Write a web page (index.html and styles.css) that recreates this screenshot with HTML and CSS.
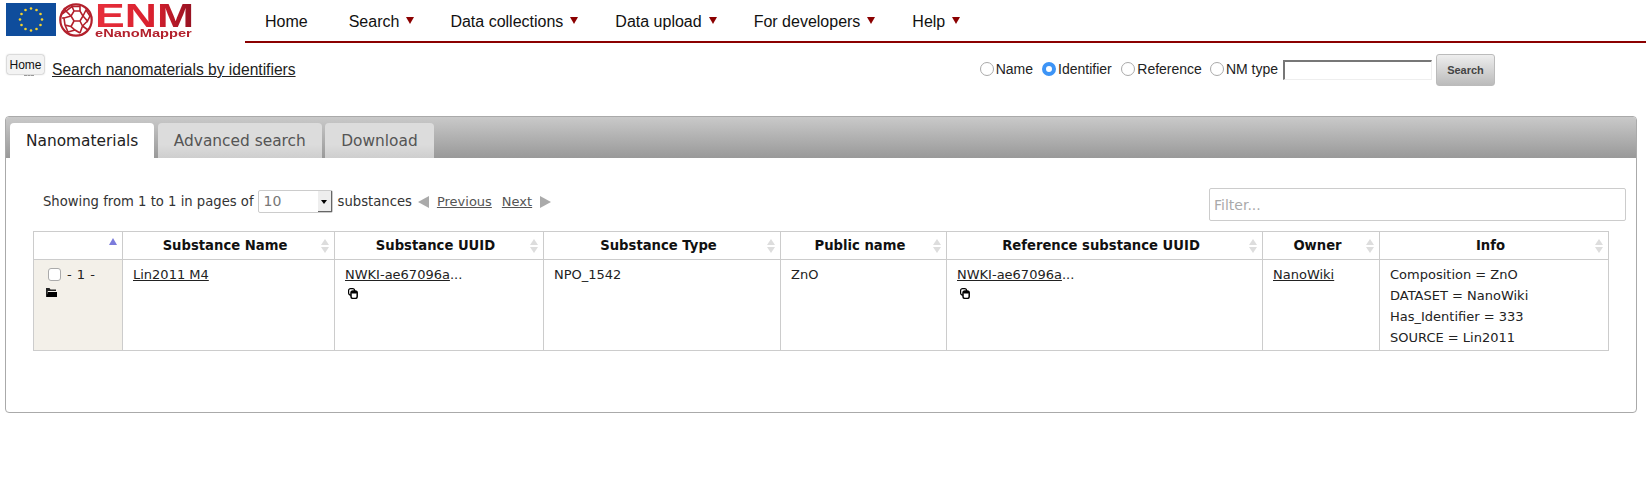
FILE: index.html
```html
<!DOCTYPE html>
<html lang="en">
	<head>
		<meta charset="UTF-8" />
		<title>Search nanomaterials by identifiers</title>
		<link rel="stylesheet" href="styles.css">
	</head>
	<body>
		<div class="topbar">
			<div class="logo">
				<svg class="flag" width="50" height="33" viewBox="0 0 50 33">
					<rect width="50" height="33" fill="#0f4d9c" />
					<g fill="#f6d32d">
						<circle cx="25" cy="5.500" r="1.300" /><circle cx="30.500" cy="7" r="1.300" /><circle cx="34.500" cy="11" r="1.300" />
						<circle cx="36" cy="16.500" r="1.300" /><circle cx="34.500" cy="22" r="1.300" /><circle cx="30.500" cy="26" r="1.300" />
						<circle cx="25" cy="27.500" r="1.300" /><circle cx="19.500" cy="26" r="1.300" /><circle cx="15.500" cy="22" r="1.300" />
						<circle cx="14" cy="16.500" r="1.300" /><circle cx="15.500" cy="11" r="1.300" /><circle cx="19.500" cy="7" r="1.300" />
					</g>
				</svg>
				<svg class="ball" width="34" height="34" viewBox="0 0 34 34">
					<circle cx="17" cy="17" r="15.700" fill="#fff" stroke="#b3202c" stroke-width="2.200" />
					<g fill="none" stroke="#b3202c" stroke-width="1.600">
						<path d="M15 8h6l3 5-3 5h-6l-3-5z" />
						<path d="M15 8L13 3.500h8L21 8M24 13l3-6 4 6-2.500 5-4.500-5M21 18l2.500 5 5-5M23.500 23L21 30M15 18l-3 5.500 4 3.500 5 3M12 13L7 8l6-4.500M12 13l-7 2 1 7 6 1.500M6 22l3 7 7-2" />
						<path d="M3 11l4-3M3 15h2M29 27l-5.500-4M7 8L5 5" />
					</g>
				</svg>
				<div class="brand">
					<span class="brand-big">ENM</span>
					<span class="brand-small">eNanoMapper</span>
				</div>
			</div>
			<ul class="mainmenu">
				<li class="first">Home</li>
				<li class="second">Search<i class="caret"></i></li>
				<li>Data collections<i class="caret"></i></li>
				<li>Data upload<i class="caret"></i></li>
				<li>For developers<i class="caret"></i></li>
				<li>Help<i class="caret"></i></li>
			</ul>
		</div>

		<div class="searchrow">
			<span class="tip">Home</span>
			<a class="searchtitle" href="#">Search nanomaterials by identifiers</a>
			<form class="searchform">
				<label class="name"><input type="radio" name="by" />Name</label>
				<label class="wide"><input type="radio" name="by" checked />Identifier</label>
				<label><input type="radio" name="by" />Reference</label>
				<label><input type="radio" name="by" />NM type</label>
				<input class="searchbox" type="text" />
				<button class="searchbtn" type="button">Search</button>
			</form>
		</div>

		<div class="panel">
			<div class="tabbar">
				<div class="tab active">Nanomaterials</div>
				<div class="tab">Advanced search</div>
				<div class="tab">Download</div>
			</div>
			<div class="tabbody">
				<div class="controls">
					<div class="pager">
						Showing from 1 to 1 in pages of
						<span class="pagesize">10<i class="pagesize-btn"></i></span>
						substances
						<i class="tri tri-left"></i>
						<a href="#">Previous</a>
						<a class="next" href="#">Next</a>
						<i class="tri tri-right"></i>
					</div>
					<input class="filter" type="text" placeholder="Filter..." />
				</div>
				<table class="results">
					<colgroup>
						<col class="c0" /><col class="c1" /><col class="c2" /><col class="c3" />
						<col class="c4" /><col class="c5" /><col class="c6" /><col class="c7" />
					</colgroup>
					<thead>
						<tr>
							<th class="sorted"></th>
							<th class="sortable">Substance Name</th>
							<th class="sortable">Substance UUID</th>
							<th class="sortable">Substance Type</th>
							<th class="sortable">Public name</th>
							<th class="sortable">Reference substance UUID</th>
							<th class="sortable">Owner</th>
							<th class="sortable">Info</th>
						</tr>
					</thead>
					<tbody>
						<tr>
							<td class="rowhead">
								<div class="rownum"><input type="checkbox" /> - 1 -</div>
								<svg class="folder" width="11" height="9" viewBox="0 0 11 9"><path d="M0 1V0h3.500l1 1.500H10V3H2L1 5V1z" fill="#222" /><path d="M1.500 4h9.500v5H0.500z" fill="#000" /><path d="M0 1h1v8H0z" fill="#222" /></svg>
							</td>
							<td><a href="#">Lin2011 M4</a></td>
							<td>
								<a href="#">NWKI-ae67096a</a>...
								<svg class="copyicon" width="10" height="11" viewBox="0 0 10 11"><rect x="0.600" y="0.600" width="6" height="6.500" rx="2" fill="#fff" stroke="#000" stroke-width="1.200" /><rect x="3" y="3" width="6.200" height="7.400" rx="2" fill="#fff" stroke="#000" stroke-width="1.500" /><rect x="3" y="3" width="6.200" height="2.500" rx="1" fill="#000" /></svg>
							</td>
							<td>NPO_1542</td>
							<td>ZnO</td>
							<td>
								<a href="#">NWKI-ae67096a</a>...
								<svg class="copyicon" width="10" height="11" viewBox="0 0 10 11"><rect x="0.600" y="0.600" width="6" height="6.500" rx="2" fill="#fff" stroke="#000" stroke-width="1.200" /><rect x="3" y="3" width="6.200" height="7.400" rx="2" fill="#fff" stroke="#000" stroke-width="1.500" /><rect x="3" y="3" width="6.200" height="2.500" rx="1" fill="#000" /></svg>
							</td>
							<td><a href="#">NanoWiki</a></td>
							<td class="info">Composition = ZnO<br />DATASET = NanoWiki<br />Has_Identifier = 333<br />SOURCE = Lin2011</td>
						</tr>
					</tbody>
				</table>
			</div>
		</div>
	</body>
</html>
```

FILE: styles.css
```css
* {
	margin: 0;
	padding: 0;
	box-sizing: border-box;
}
body {
	font-family: "Liberation Sans", Arial, sans-serif;
	color: #222;
	background-color: #fff;
}
a {
	color: #222;
}

/* top bar */
.topbar {
	display: flex;
	height: 43px;
}
.logo {
	width: 245px;
	display: flex;
	align-items: flex-start;
	padding: 3px 0 0 6px;
}
.ball {
	margin-left: 3px;
}
.brand {
	display: flex;
	flex-direction: column;
	width: 98px;
	margin-left: 2px;
}
.brand-big {
	width: 72px;
	height: 25px;
	font-size: 33px;
	font-weight: bold;
	line-height: 25px;
	transform: scaleX(1.350);
	transform-origin: left;
	background: linear-gradient(90deg, #e8303c, #d8202e 60%, #961222);
	-webkit-background-clip: text;
	background-clip: text;
	color: transparent;
}
.brand-small {
	width: 62px;
	height: 8px;
	margin-top: 1px;
	font-size: 11px;
	font-weight: bold;
	line-height: 8px;
	white-space: nowrap;
	transform: scaleX(1.330);
	transform-origin: left;
	color: #b3202c;
}
.mainmenu {
	flex: 1;
	list-style: none;
	display: flex;
	padding: 13px 0 0 20px;
	border-bottom: 2px solid #8b0000;
	font-size: 16px;
	line-height: 18px;
	color: #111;
}
.mainmenu li {
	margin-right: 37px;
}
.mainmenu li.first {
	margin-right: 41px;
}
.mainmenu li.second {
	margin-right: 36px;
}
.caret {
	display: inline-block;
	margin: 0 0 3px 7px;
	border-left: 4.500px solid transparent;
	border-right: 4.500px solid transparent;
	border-top: 7px solid #8b0000;
}

/* search row */
.searchrow {
	position: relative;
	display: flex;
	align-items: flex-start;
	justify-content: space-between;
	height: 73px;
	padding: 11px 151px 0 52px;
}
.tip {
	position: absolute;
	left: 7px;
	top: 12px;
	width: 37px;
	height: 19px;
	border-radius: 2px;
	background-color: #f3f3f3;
	box-shadow: 0 0 2px #777;
	font-size: 12px;
	line-height: 20px;
	text-align: center;
	color: #111;
}
.tip::after {
	content: "";
	position: absolute;
	left: 17px;
	top: 20px;
	width: 10px;
	border-top: 1px dashed #999;
}
.searchtitle {
	font-size: 15.600px;
	line-height: 31px;
}
.searchform {
	display: flex;
	align-items: center;
	height: 31px;
	font-size: 14px;
	color: #222;
}
.searchform label {
	display: flex;
	align-items: center;
	margin-right: 8px;
	padding-bottom: 2px;
}
.searchform label.name {
	margin-right: 9px;
}
.searchform label.wide {
	margin-right: 9.500px;
}
.searchform input[type="radio"] {
	appearance: none;
	width: 14px;
	height: 14px;
	margin-right: 2px;
	border: 1px solid #aaa;
	border-radius: 50%;
	background-color: #fff;
}
.searchform input[type="radio"]:checked {
	border: 4.500px solid #3d94f6;
	background-color: #fff;
}
.searchbox {
	width: 149px;
	height: 20px;
	margin: 0 4px 0 -3px;
	border: 1px solid #eee;
	border-top: 2px solid #777;
	border-left: 2px solid #777;
}
.searchbtn {
	width: 59px;
	height: 32px;
	border: 1px solid #bbb;
	border-radius: 3px;
	background: linear-gradient(#eee, #bbb);
	font-family: "Liberation Sans", Arial, sans-serif;
	font-size: 11px;
	font-weight: bold;
	color: #444;
}

/* panel with tabs */
.panel {
	margin: 0 9px 0 5px;
	height: 297px;
	border: 1px solid #aaa;
	border-radius: 4px;
	font-family: "DejaVu Sans", Verdana, sans-serif;
}
.tabbar {
	display: flex;
	align-items: flex-end;
	height: 41px;
	padding-left: 4px;
	gap: 3.400px;
	border-radius: 3px 3px 0 0;
	background: linear-gradient(#c9c9c9, #999);
}
.tab {
	height: 35px;
	padding: 0 16px;
	border-radius: 4px 4px 0 0;
	background: linear-gradient(#dcdcdc 62%, #cecece);
	font-size: 15.400px;
	line-height: 37px;
	color: #555;
}
.tab.active {
	background: #fff;
	color: #222;
}
.tabbody {
	padding: 30px 10px 0 27px;
}
.controls {
	display: flex;
	justify-content: space-between;
	align-items: flex-start;
	height: 43px;
}
.pager {
	display: flex;
	align-items: center;
	gap: 5px;
	padding: 3px 0 0 10px;
	height: 24px;
	font-size: 13.200px;
	color: #333;
}
.pager a {
	color: #555;
	margin-left: 3px;
	font-size: 13px;
}
.pager a.next {
	margin-left: 5px;
}
.pagesize {
	position: relative;
	width: 75px;
	height: 23px;
	margin-left: -1px;
	padding-left: 5px;
	border: 1px solid #ccc;
	border-radius: 2px;
	font-size: 14px;
	line-height: 21px;
	color: #777;
}
.pagesize-btn {
	position: absolute;
	right: 0;
	top: 0;
	width: 14px;
	height: 21px;
	border-right: 1px solid #666;
	border-bottom: 1px solid #666;
	background-color: #eee;
}
.pagesize-btn::after {
	content: "";
	position: absolute;
	left: 3px;
	top: 9px;
	border-left: 3px solid transparent;
	border-right: 3px solid transparent;
	border-top: 4px solid #000;
}
.tri {
	display: inline-block;
	border-top: 6px solid transparent;
	border-bottom: 6px solid transparent;
}
.tri-left {
	margin-left: 1px;
	border-right: 11px solid #aaa;
}
.tri-right {
	margin-left: 3px;
	border-left: 11px solid #aaa;
}
.filter {
	width: 417px;
	height: 33px;
	padding-left: 4px;
	border: 1px solid #ccc;
	border-radius: 2px;
	font-family: "DejaVu Sans", Verdana, sans-serif;
	font-size: 14px;
}
.filter::placeholder {
	color: #aaa;
}

/* results table */
.results {
	width: 1575px;
	table-layout: fixed;
	border-collapse: collapse;
	font-size: 13px;
	color: #222;
}
.c0 { width: 89px; }
.c1 { width: 212px; }
.c2 { width: 209px; }
.c3 { width: 237px; }
.c4 { width: 166px; }
.c5 { width: 316px; }
.c6 { width: 117px; }
.c7 { width: 229px; }
.results th,
.results td {
	border: 1px solid #ccc;
}
.results th {
	position: relative;
	height: 28px;
	padding-right: 7px;
	font-size: 13.200px;
	font-weight: bold;
	color: #111;
}
.results td {
	padding: 4px 10px 2px;
	vertical-align: top;
	line-height: 21px;
}
.sortable::before,
.sortable::after,
.sorted::before {
	content: "";
	position: absolute;
	right: 5px;
	border-left: 4px solid transparent;
	border-right: 4px solid transparent;
}
.sortable::before {
	top: 7px;
	border-bottom: 6px solid #ddd;
}
.sortable::after {
	top: 15px;
	border-top: 6px solid #ddd;
}
.sorted::before {
	top: 6px;
	border-bottom: 7px solid #7b7bdc;
}
.results td.rowhead {
	padding: 4px 0 0 12px;
	background-color: #f3f0e9;
}
.rownum {
	display: flex;
	align-items: center;
	gap: 6px;
	padding-left: 2px;
	letter-spacing: 0.500px;
}
.rownum input {
	appearance: none;
	width: 13px;
	height: 13px;
	border: 1px solid #aaa;
	border-radius: 3px;
	background-color: #fff;
}
.folder {
	display: block;
	margin-top: 3px;
}
.copyicon {
	display: block;
	margin: 3px 0 0 3px;
}
```
